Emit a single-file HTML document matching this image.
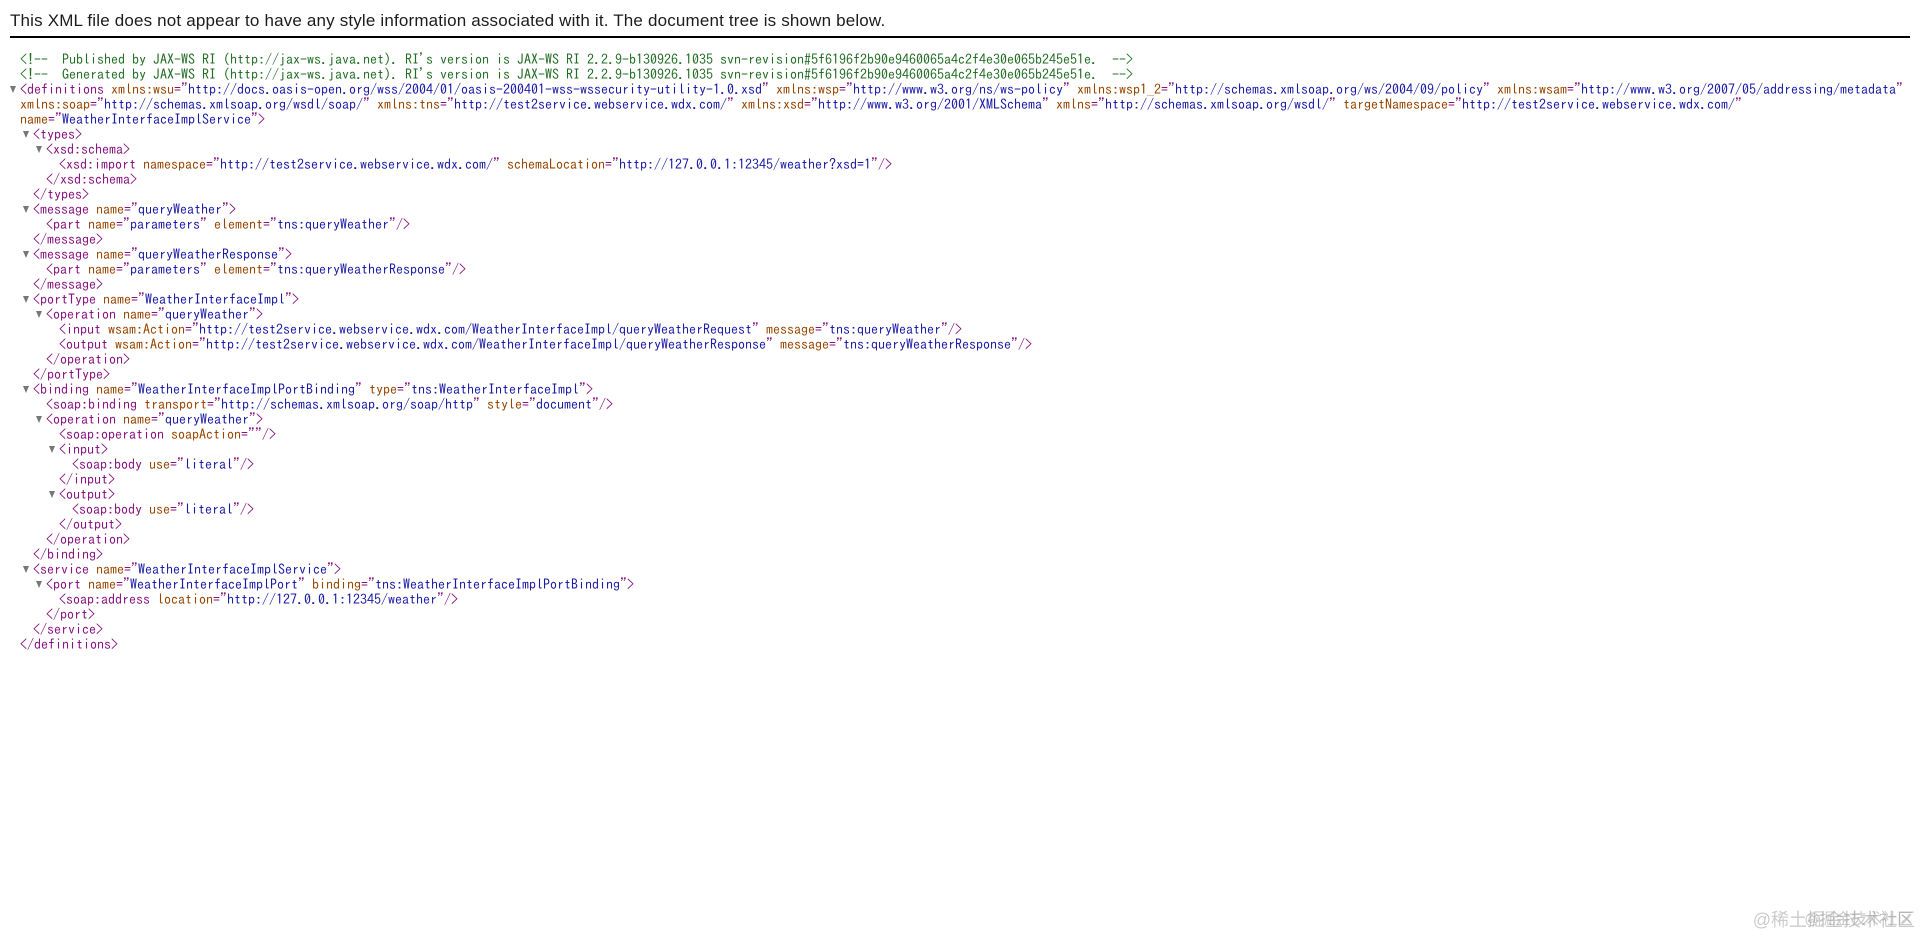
<!DOCTYPE html>
<html><head><meta charset="utf-8"><style>
html,body{margin:0;padding:0;background:#fff;width:1920px;height:937px;overflow:hidden}
#h{position:absolute;left:10px;top:11px;font:17px/20px "Liberation Sans",sans-serif;letter-spacing:.17px;color:#1c1c1c;white-space:pre}
#r{position:absolute;left:10px;top:36px;width:1900px;height:2px;background:#000}
#x{position:absolute;left:0;top:52px;width:1920px;font:14px/15px "IPAGothic","Liberation Mono",monospace;color:#881280}
#x div{height:15px;white-space:pre}
.p0{padding-left:20px}.p1{padding-left:33px}.p2{padding-left:46px}.p3{padding-left:59px}.p4{padding-left:72px}
i{position:absolute;margin-left:-10px;margin-top:4px;width:0;height:0;border-left:3.5px solid transparent;border-right:3.5px solid transparent;border-top:7px solid #777}
b{font-weight:normal;color:#994500}
u{text-decoration:none;color:#1a1aa6}
s{text-decoration:none;color:#236e25}
.w{position:absolute;color:#999;opacity:.5;font-family:"Liberation Sans","Noto Sans CJK SC",sans-serif;white-space:pre}
</style></head><body>
<div id="h">This XML file does not appear to have any style information associated with it. The document tree is shown below.</div>
<div id="r"></div>
<div id="x">
<div class="p0"><s>&lt;!--  Published by JAX-WS RI (http://jax-ws.java.net). RI's version is JAX-WS RI 2.2.9-b130926.1035 svn-revision#5f6196f2b90e9460065a4c2f4e30e065b245e51e.  --&gt;</s></div>
<div class="p0"><s>&lt;!--  Generated by JAX-WS RI (http://jax-ws.java.net). RI's version is JAX-WS RI 2.2.9-b130926.1035 svn-revision#5f6196f2b90e9460065a4c2f4e30e065b245e51e.  --&gt;</s></div>
<div class="p0"><i></i>&lt;definitions <b>xmlns:wsu</b>="<u>http://docs.oasis-open.org/wss/2004/01/oasis-200401-wss-wssecurity-utility-1.0.xsd</u>" <b>xmlns:wsp</b>="<u>http://www.w3.org/ns/ws-policy</u>" <b>xmlns:wsp1_2</b>="<u>http://schemas.xmlsoap.org/ws/2004/09/policy</u>" <b>xmlns:wsam</b>="<u>http://www.w3.org/2007/05/addressing/metadata</u>"</div>
<div class="p0"><b>xmlns:soap</b>="<u>http://schemas.xmlsoap.org/wsdl/soap/</u>" <b>xmlns:tns</b>="<u>http://test2service.webservice.wdx.com/</u>" <b>xmlns:xsd</b>="<u>http://www.w3.org/2001/XMLSchema</u>" <b>xmlns</b>="<u>http://schemas.xmlsoap.org/wsdl/</u>" <b>targetNamespace</b>="<u>http://test2service.webservice.wdx.com/</u>"</div>
<div class="p0"><b>name</b>="<u>WeatherInterfaceImplService</u>"&gt;</div>
<div class="p1"><i></i>&lt;types&gt;</div>
<div class="p2"><i></i>&lt;xsd:schema&gt;</div>
<div class="p3">&lt;xsd:import <b>namespace</b>="<u>http://test2service.webservice.wdx.com/</u>" <b>schemaLocation</b>="<u>http://127.0.0.1:12345/weather?xsd=1</u>"/&gt;</div>
<div class="p2">&lt;/xsd:schema&gt;</div>
<div class="p1">&lt;/types&gt;</div>
<div class="p1"><i></i>&lt;message <b>name</b>="<u>queryWeather</u>"&gt;</div>
<div class="p2">&lt;part <b>name</b>="<u>parameters</u>" <b>element</b>="<u>tns:queryWeather</u>"/&gt;</div>
<div class="p1">&lt;/message&gt;</div>
<div class="p1"><i></i>&lt;message <b>name</b>="<u>queryWeatherResponse</u>"&gt;</div>
<div class="p2">&lt;part <b>name</b>="<u>parameters</u>" <b>element</b>="<u>tns:queryWeatherResponse</u>"/&gt;</div>
<div class="p1">&lt;/message&gt;</div>
<div class="p1"><i></i>&lt;portType <b>name</b>="<u>WeatherInterfaceImpl</u>"&gt;</div>
<div class="p2"><i></i>&lt;operation <b>name</b>="<u>queryWeather</u>"&gt;</div>
<div class="p3">&lt;input <b>wsam:Action</b>="<u>http://test2service.webservice.wdx.com/WeatherInterfaceImpl/queryWeatherRequest</u>" <b>message</b>="<u>tns:queryWeather</u>"/&gt;</div>
<div class="p3">&lt;output <b>wsam:Action</b>="<u>http://test2service.webservice.wdx.com/WeatherInterfaceImpl/queryWeatherResponse</u>" <b>message</b>="<u>tns:queryWeatherResponse</u>"/&gt;</div>
<div class="p2">&lt;/operation&gt;</div>
<div class="p1">&lt;/portType&gt;</div>
<div class="p1"><i></i>&lt;binding <b>name</b>="<u>WeatherInterfaceImplPortBinding</u>" <b>type</b>="<u>tns:WeatherInterfaceImpl</u>"&gt;</div>
<div class="p2">&lt;soap:binding <b>transport</b>="<u>http://schemas.xmlsoap.org/soap/http</u>" <b>style</b>="<u>document</u>"/&gt;</div>
<div class="p2"><i></i>&lt;operation <b>name</b>="<u>queryWeather</u>"&gt;</div>
<div class="p3">&lt;soap:operation <b>soapAction</b>=""/&gt;</div>
<div class="p3"><i></i>&lt;input&gt;</div>
<div class="p4">&lt;soap:body <b>use</b>="<u>literal</u>"/&gt;</div>
<div class="p3">&lt;/input&gt;</div>
<div class="p3"><i></i>&lt;output&gt;</div>
<div class="p4">&lt;soap:body <b>use</b>="<u>literal</u>"/&gt;</div>
<div class="p3">&lt;/output&gt;</div>
<div class="p2">&lt;/operation&gt;</div>
<div class="p1">&lt;/binding&gt;</div>
<div class="p1"><i></i>&lt;service <b>name</b>="<u>WeatherInterfaceImplService</u>"&gt;</div>
<div class="p2"><i></i>&lt;port <b>name</b>="<u>WeatherInterfaceImplPort</u>" <b>binding</b>="<u>tns:WeatherInterfaceImplPortBinding</u>"&gt;</div>
<div class="p3">&lt;soap:address <b>location</b>="<u>http://127.0.0.1:12345/weather</u>"/&gt;</div>
<div class="p2">&lt;/port&gt;</div>
<div class="p1">&lt;/service&gt;</div>
<div class="p0">&lt;/definitions&gt;</div>
</div>
<div class="w" style="right:5px;top:908px;font-size:18px;line-height:24px">@稀土掘金技术社区</div>
<div class="w" style="right:7px;top:908px;font-size:15.5px;line-height:24px">@掘金技术社区</div>
</body></html>
